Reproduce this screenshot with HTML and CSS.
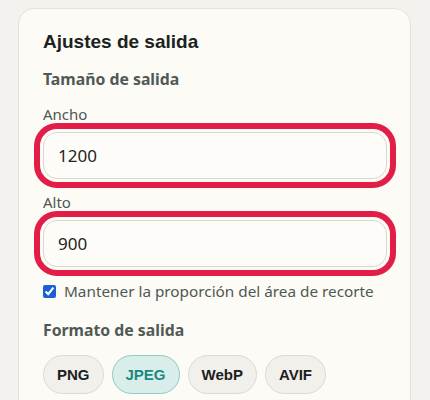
FILE: index.html
```html
<!DOCTYPE html>
<html lang="es">
<head>
<meta charset="utf-8">
<link rel="stylesheet" href="styles.css">
</head>
<body>
<section class="card">
  <h2 class="title">Ajustes de salida</h2>
  <h3 class="section-label">Tamaño de salida</h3>
  <label class="field-label" for="w">Ancho</label>
  <input class="field highlight" id="w" type="text" value="1200">
  <label class="field-label second" for="h">Alto</label>
  <input class="field highlight" id="h" type="text" value="900">
  <label class="check-row">
    <input type="checkbox" class="check" checked>
    <span>Mantener la proporción del área de recorte</span>
  </label>
  <h3 class="section-label format">Formato de salida</h3>
  <div class="formats">
    <button class="pill">PNG</button>
    <button class="pill active">JPEG</button>
    <button class="pill">WebP</button>
    <button class="pill">AVIF</button>
  </div>
</section>
</body>
</html>
```
FILE: styles.css
```css
html, body {
  margin: 0;
  padding: 0;
}
body {
  background: #f3f2ee;
  font-family: "Noto Sans", sans-serif;
  height: 400px;
  overflow: hidden;
}
.card {
  box-sizing: border-box;
  width: 393px;
  margin: 8px 0 0 18px;
  padding: 20px 24px 40px;
  background: #fcfbf6;
  border: 1px solid #e3e1da;
  border-radius: 16px;
  display: flex;
  flex-direction: column;
  align-items: flex-start;
}
.title {
  margin: 0;
  font-family: "Liberation Sans", Arial, sans-serif;
  font-size: 19px;
  line-height: 26px;
  font-weight: 700;
  color: #1b2320;
}
.section-label {
  margin: 14px 0 0;
  font-size: 15.8px;
  line-height: 20px;
  font-weight: 700;
  color: #505955;
}
.section-label.format {
  margin-top: 19px;
}
.field-label {
  margin-top: 15px;
  font-size: 15px;
  line-height: 20px;
  color: #4f5853;
}
.field-label.second {
  margin-top: 13px;
}
.field {
  box-sizing: border-box;
  width: 344px;
  height: 47px;
  margin-top: 8px;
  padding: 0 14px;
  border: 1px solid #d9d7d0;
  border-radius: 14px;
  background: #fdfcf8;
  font-family: "Noto Sans", sans-serif;
  font-size: 17px;
  color: #1e2421;
}
.highlight {
  outline: 6px solid #e11d48;
  outline-offset: 3px;
}
.check-row {
  margin-top: 14px;
  display: flex;
  align-items: center;
  gap: 8px;
  font-size: 15.3px;
  line-height: 20px;
  color: #4f5853;
}
.check {
  width: 13px;
  height: 13px;
  margin: 0;
  accent-color: #1a5fd4;
}
.formats {
  margin-top: 15px;
  display: flex;
  gap: 8px;
}
.pill {
  box-sizing: border-box;
  height: 39px;
  padding: 0 13px;
  border: 1px solid #dcdad3;
  border-radius: 999px;
  background: #f1f0eb;
  font-family: "Liberation Sans", Arial, sans-serif;
  font-size: 15px;
  font-weight: 700;
  color: #1a201d;
}
.pill.active {
  background: #d9eeea;
  border-color: #8ecbc3;
  color: #1a8a80;
}
```
